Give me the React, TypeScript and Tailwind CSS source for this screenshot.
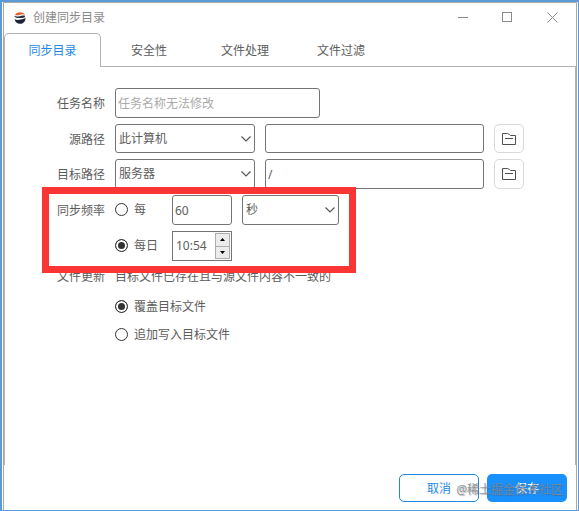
import { useState, type ReactNode } from "react";

const fieldClass =
  "h-full min-w-0 rounded-[3px] border border-[#747474] bg-white text-[#5c5c5c] outline-none";

function AppLogo() {
  return (
    <svg width="12" height="12" viewBox="0 0 12 12" aria-hidden="true">
      <path d="M1 3C1.800 1 3.800 .2 6 .2 8.500 .2 10.300 1.200 11 3 9.500 2 8 2.200 6.500 2.700 4.500 3.400 2.500 3.600 1 3Z" fill="#e8622c" />
      <path d="M.3 3.800C1.500 4.600 3.500 4.700 5.500 4.200 7.500 3.600 9 3.200 11 3.800 11.500 5.500 9.500 6.200 7.500 6 5 5.800 1 6.800 .3 3.800Z" fill="#26303f" />
      <path d="M.6 7C2.500 8.200 4.500 8 6.500 7.600 8.500 7.200 10 7 11.600 6 11.500 9.800 9 11.800 6 11.800 3.200 11.800 1 10 .6 7Z" fill="#1b2436" />
    </svg>
  );
}

function FolderButton({ label }: { label: string }) {
  return (
    <button
      type="button"
      aria-label={label}
      className="flex h-full w-[30px] shrink-0 items-center justify-center rounded-[5px] border border-[#d9d9d9] bg-white text-[#505050]"
    >
      <svg width="14" height="12" viewBox="0 0 14 12" fill="none" stroke="currentColor">
        <path d="M.5 .5H5.500L7.500 1.500 8.500 2.500H13.500V11.500H.5Z" />
        <path d="M3 5.500H11" />
      </svg>
    </button>
  );
}

function Select({ label, value, width }: { label: string; value: string; width: string }) {
  return (
    <div className={`relative h-full shrink-0 ${width}`}>
      <select aria-label={label} defaultValue={value} className={`${fieldClass} w-full appearance-none pl-[3px] pr-5`}>
        <option>{value}</option>
      </select>
      <svg
        className="pointer-events-none absolute inset-y-0 right-1 my-auto text-[#555]"
        width="10"
        height="6"
        viewBox="0 0 10 6"
        fill="none"
        stroke="currentColor"
        strokeWidth="1.200"
      >
        <path d="M.5 .5 5 5 9.500 .5" />
      </svg>
    </div>
  );
}

function Radio({ name, label, checked, onSelect }: { name: string; label: string; checked: boolean; onSelect: () => void }) {
  return (
    <label className="flex items-start gap-1.5">
      <input
        type="radio"
        name={name}
        checked={checked}
        onChange={onSelect}
        className="mt-px size-[13px] shrink-0 appearance-none rounded-full border border-[#333] bg-white checked:bg-[#333] checked:shadow-[inset_0_0_0_2px_white]"
      />
      {label}
    </label>
  );
}

function Row({ label, htmlFor, height = "h-[30px]", children }: { label?: string; htmlFor?: string; height?: string; children: ReactNode }) {
  return (
    <div className={`flex items-center gap-2.5 ${height}`}>
      <label htmlFor={htmlFor} className="w-12 shrink-0 pt-0.5 text-right">
        {label}
      </label>
      {children}
    </div>
  );
}

const tabs = ["同步目录", "安全性", "文件处理", "文件过滤"];

export default function App() {
  const [tab, setTab] = useState(0);
  const [schedule, setSchedule] = useState("daily");
  const [update, setUpdate] = useState("overwrite");

  return (
    <div className="min-h-screen flex flex-col border-t-2 border-l-2 border-r border-b border-[#5b9bd5] bg-white px-px font-['Noto_Sans','Noto_Sans_CJK_SC',sans-serif] text-xs text-[#5c5c5c]">
      <div className="flex grow flex-col border-x border-t border-[#a9a9ab]">
        <header className="flex h-[30px] shrink-0 items-center justify-between pr-[18px] pl-2.5 text-[#8a8a8a]">
          <div className="flex items-center gap-[7px]">
            <AppLogo />
            <h1>创建同步目录</h1>
          </div>
          <div className="flex items-center gap-[34px] pb-0.5">
            <button type="button" aria-label="最小化">
              <svg width="11" height="11" viewBox="0 0 11 11" stroke="currentColor">
                <path d="M1 5.500H11" />
              </svg>
            </button>
            <button type="button" aria-label="最大化">
              <svg width="11" height="11" viewBox="0 0 11 11" fill="none" stroke="currentColor">
                <rect x=".5" y=".5" width="9" height="9" />
              </svg>
            </button>
            <button type="button" aria-label="关闭">
              <svg width="11" height="11" viewBox="0 0 11 11" stroke="currentColor">
                <path d="M.5 .5 10.500 10.500M10.500 .5 .5 10.500" />
              </svg>
            </button>
          </div>
        </header>

        <div role="tablist" className="flex h-[34px] shrink-0">
          {tabs.map((name, i) => (
            <button
              key={name}
              type="button"
              role="tab"
              aria-selected={tab === i}
              onClick={() => setTab(i)}
              className={
                tab === i
                  ? "w-[97px] rounded-t-[5px] border-x border-t border-[#b4b2b5] text-[#1e88e5]"
                  : "w-24 border-b border-[#b4b2b5] pt-0.5"
              }
            >
              {name}
            </button>
          ))}
          <div className="grow border-b border-[#b4b2b5]" />
        </div>

        <main className="flex grow flex-col gap-1.5 border-x border-[#b4b2b5] pt-[21px] pr-[51px] pb-5 pl-[52px]">
          <Row label="任务名称" htmlFor="task-name">
            <input
              id="task-name"
              placeholder="任务名称无法修改"
              className={`${fieldClass} w-[205px] px-0.5 placeholder:text-[#ababab]`}
            />
          </Row>
          <Row label="源路径" htmlFor="source-path" height="h-[29px]">
            <Select label="源位置" value="此计算机" width="w-[140px]" />
            <input id="source-path" className={`${fieldClass} flex-1 px-0.5`} />
            <FolderButton label="选择源路径" />
          </Row>
          <Row label="目标路径" htmlFor="target-path">
            <Select label="目标位置" value="服务器" width="w-[140px]" />
            <input id="target-path" defaultValue="/" className={`${fieldClass} flex-1 px-0.5`} />
            <FolderButton label="选择目标路径" />
          </Row>

          <div className="relative flex w-[282px] flex-col gap-1.5">
            <Row label="同步频率">
              <div className="w-[47px] shrink-0">
                <Radio name="schedule" label="每" checked={schedule === "every"} onSelect={() => setSchedule("every")} />
              </div>
              <input aria-label="间隔" defaultValue="60" className={`${fieldClass} w-[60px] px-0.5`} />
              <Select label="间隔单位" value="秒" width="w-[97px]" />
            </Row>
            <Row>
              <div className="w-[47px] shrink-0">
                <Radio name="schedule" label="每日" checked={schedule === "daily"} onSelect={() => setSchedule("daily")} />
              </div>
              <div className="flex h-full w-[60px] border border-[#747474] p-px">
                <input aria-label="每日时间" defaultValue="10:54" className="min-w-0 flex-1 pl-0.5 outline-none" />
                <div className="flex w-[15px] flex-col border border-[#adadad] bg-[#ececec] text-black">
                  <button type="button" aria-label="增加" className="flex flex-1 items-center justify-center border-b border-[#adadad]">
                    <svg width="5" height="3" viewBox="0 0 5 3" fill="currentColor">
                      <path d="M0 3 2.500 0 5 3Z" />
                    </svg>
                  </button>
                  <button type="button" aria-label="减少" className="flex flex-1 items-center justify-center">
                    <svg width="5" height="3" viewBox="0 0 5 3" fill="currentColor">
                      <path d="M0 0 2.500 3 5 0Z" />
                    </svg>
                  </button>
                </div>
              </div>
            </Row>
            <div className="pointer-events-none absolute -top-2 -right-[17px] -bottom-3 -left-[15px] border-[7px] border-[#fb3434]" />
          </div>

          <Row label="文件更新" height="h-[18px]">
            <p className="pt-0.5">目标文件已存在且与源文件内容不一致的</p>
          </Row>
          <div className="flex flex-col gap-3 pt-2 pl-[58px]">
            <Radio name="update" label="覆盖目标文件" checked={update === "overwrite"} onSelect={() => setUpdate("overwrite")} />
            <Radio name="update" label="追加写入目标文件" checked={update === "append"} onSelect={() => setUpdate("append")} />
          </div>
        </main>

        <footer className="relative flex h-[45px] shrink-0 items-center justify-end gap-2 pr-[9px]">
          <button type="button" className="h-7 w-20 rounded-[5px] border border-[#1e88e5] bg-white pt-0.5 text-[#1e88e5]">
            取消
          </button>
          <button type="button" className="h-7 w-20 rounded-[5px] bg-[#1890ff] pt-0.5 text-white">
            保存
          </button>
          <span className="pointer-events-none absolute right-[13px] pt-1 text-[#808890]/85 [text-shadow:1px_1px_1px_rgba(80,80,80,0.4)]">
            @稀土掘金技术社区
          </span>
        </footer>
      </div>
    </div>
  );
}
